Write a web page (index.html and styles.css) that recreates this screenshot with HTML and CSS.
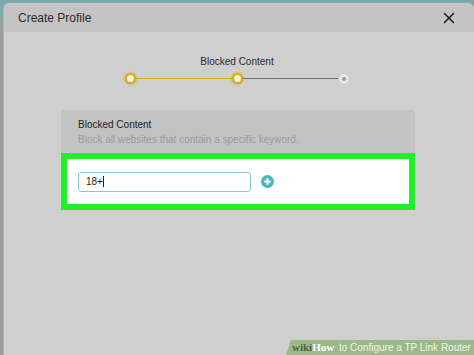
FILE: index.html
```html
<!DOCTYPE html>
<html lang="en">
<head>
    <meta charset="UTF-8">
    <meta name="viewport" content="width=device-width, initial-scale=1.0">
    <title>Create Profile</title>
    <link rel="stylesheet" href="styles.css">
</head>
<body>
    <div class="dialog">
        <div class="dialog-header">
            <span class="dialog-title">Create Profile</span>
            <svg class="close-icon" width="12" height="12" viewBox="0 0 12 12">
                <path d="M1.5 1.5 L10.5 10.5 M10.5 1.5 L1.5 10.5" stroke="#1a1a1a" stroke-width="1.5" stroke-linecap="round"/>
            </svg>
        </div>

        <div class="dialog-body">
            <div class="stepper">
                <div class="step-label">Blocked Content</div>
                <div class="step-track">
                    <span class="dot done"></span>
                    <span class="line done"></span>
                    <span class="dot done"></span>
                    <span class="line"></span>
                    <span class="dot todo"></span>
                </div>
            </div>

            <div class="card">
                <div class="card-head">
                    <div class="card-title">Blocked Content</div>
                    <div class="card-sub">Block all websites that contain a specific keyword.</div>
                </div>
                <div class="card-body">
                    <div class="keyword-input">18+<span class="caret"></span></div>
                    <svg class="add-icon" width="13" height="13" viewBox="0 0 13 13">
                        <circle cx="6.5" cy="6.5" r="6.5" fill="#49b6c2"/>
                        <path d="M6.5 3.3 V9.7 M3.3 6.5 H9.7" stroke="#fff" stroke-width="2"/>
                    </svg>
                </div>
            </div>
        </div>
    </div>

    <div class="watermark">
        <span class="wm-wiki">wiki</span><span class="wm-how">How</span> to Configure a TP Link Router
    </div>
</body>
</html>
```

FILE: styles.css
```css
body {
    margin: 0;
    width: 474px;
    height: 355px;
    overflow: hidden;
    background: linear-gradient(#7fa9ad 0, #7fa9ad 14px, #9c9c9c 30px);
    font-family: Arial, "Liberation Sans", Helvetica, sans-serif;
    position: relative;
}
.dialog {
    margin: 3px 0 0 3px;
    height: 352px;
    background: #cfcfcf;
    border-top-left-radius: 6px;
    border-top-right-radius: 6px;
    border-left: 1px solid #b4b4b4;
    overflow: hidden;
}
.dialog-header {
    height: 29px;
    background: #c4c4c4;
    display: flex;
    align-items: center;
    justify-content: space-between;
    padding: 0 19px 0 14px;
}
.dialog-title {
    font-size: 12px;
    color: #2b2b2b;
}
.close-icon {
    display: block;
}
.dialog-body {
    padding-top: 24px;
}
.stepper {
    display: flex;
    flex-direction: column;
    align-items: center;
    margin-left: -4px;
}
.step-label {
    font-size: 10px;
    color: #2a2a2a;
}
.step-track {
    display: flex;
    align-items: center;
    margin-top: 6px;
}
.dot {
    border-radius: 50%;
    box-sizing: border-box;
}
.dot.done {
    border: 2.5px solid #d8aa14;
    background: #f4f0e0;
    box-shadow: 0 0 0 1.5px rgba(216, 170, 20, 0.35);
    width: 11px;
    height: 11px;
}
.dot.todo {
    width: 10px;
    height: 10px;
    background: #dddddd;
    border: 3px solid #e8e8e8;
    box-shadow: 0 0 0 1px #c8c8c8;
    position: relative;
}
.dot.todo::after {
    content: "";
    position: absolute;
    left: 0;
    top: 0;
    width: 4px;
    height: 4px;
    border-radius: 50%;
    background: #9a9a9a;
}
.line {
    width: 96px;
    height: 1px;
    background: #6f6f6f;
}
.line.done {
    background: #d8aa14;
}
.card {
    margin: 26px 0 0 57px;
    width: 354px;
}
.card-head {
    background: #c3c3c3;
    border-radius: 3px 3px 0 0;
    padding: 9px 16px 8px 17px;
    height: 28px;
}
.card-title {
    font-size: 10px;
    color: #1e1e1e;
}
.card-sub {
    font-size: 10px;
    color: #9b9b9b;
    margin-top: 4px;
}
.card-body {
    background: #ffffff;
    border: 6px solid #22ee2a;
    height: 45px;
    display: flex;
    align-items: center;
    padding-left: 11px;
    margin-top: -2px;
}
.keyword-input {
    width: 164px;
    height: 18px;
    border: 1px solid #8cc7cb;
    border-radius: 3px;
    font-size: 10px;
    color: #222;
    padding-left: 7px;
    display: flex;
    align-items: center;
}
.caret {
    width: 1px;
    height: 11px;
    background: #222;
}
.add-icon {
    margin-left: 10px;
}
.watermark {
    position: absolute;
    right: 0;
    bottom: 0;
    height: 15px;
    width: 182px;
    background: #9cb98a;
    clip-path: polygon(5px 0, 100% 0, 100% 100%, 0 100%);
    color: #eef3ea;
    font-size: 10px;
    line-height: 15px;
    padding-left: 6px;
    white-space: nowrap;
}
.wm-wiki {
    font-family: "Liberation Serif", serif;
    font-weight: bold;
    color: #4f5f48;
    font-size: 11px;
}
.wm-how {
    font-family: "Liberation Serif", serif;
    font-weight: bold;
    color: #ffffff;
    font-size: 11px;
    margin-right: 2px;
}
```
